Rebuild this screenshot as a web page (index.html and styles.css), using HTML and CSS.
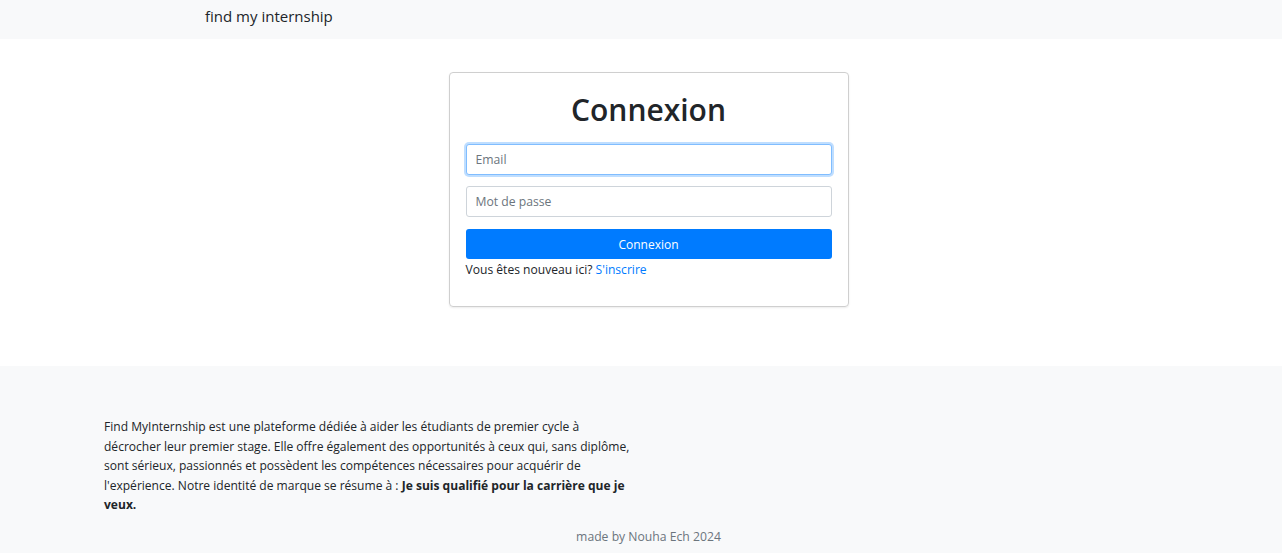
FILE: index.html
```html
<!DOCTYPE html>
<html lang="fr">
<head>
<meta charset="utf-8">
<title>find my internship</title>
<link rel="stylesheet" href="styles.css">
</head>
<body>
<nav class="navbar">
  <a class="brand" href="#">find my internship</a>
</nav>
<main class="main">
  <div class="card">
    <h1 class="title">Connexion</h1>
    <form class="form">
      <input class="field field-focus" type="email" placeholder="Email">
      <input class="field" type="password" placeholder="Mot de passe">
      <button class="btn" type="button">Connexion</button>
    </form>
    <p class="signup">Vous êtes nouveau ici? <a href="#">S'inscrire</a></p>
  </div>
</main>
<footer class="footer">
  <p class="about">Find MyInternship est une plateforme dédiée à aider les étudiants de premier cycle à décrocher leur premier stage. Elle offre également des opportunités à ceux qui, sans diplôme, sont sérieux, passionnés et possèdent les compétences nécessaires pour acquérir de l'expérience. Notre identité de marque se résume à : <strong>Je suis qualifié pour la carrière que je veux.</strong></p>
  <p class="credit">made by Nouha Ech 2024</p>
</footer>
</body>
</html>
```

FILE: styles.css
```css
* { box-sizing: border-box; }
html, body { margin: 0; padding: 0; }
body {
  font-family: "Open Sans", "Noto Sans", sans-serif;
  color: #212529;
  background: #fff;
}
.navbar {
  background: #f8f9fa;
  height: 39px;
  display: flex;
  align-items: flex-start;
  padding: 5px 0 0 205px;
}
.brand {
  color: #212529;
  text-decoration: none;
  font-size: 15px;
  line-height: 22px;
}
.main {
  display: flex;
  justify-content: center;
  padding: 33px 0 59px 15px;
}
.card {
  width: 400px;
  border: 1px solid #cfcfcf;
  border-radius: 4px;
  padding: 13px 16px 10px;
  box-shadow: 0 1px 2px rgba(0,0,0,0.08);
}
.title {
  margin: 0 0 10px;
  text-align: center;
  font-size: 30px;
  line-height: 48px;
  font-weight: 600;
  color: #212529;
}
.form {
  display: flex;
  flex-direction: column;
  gap: 11px;
}
.field {
  height: 31px;
  width: 100%;
  border: 1px solid #ced4da;
  border-radius: 3px;
  padding: 0 9px;
  font-family: inherit;
  font-size: 12.2px;
  color: #495057;
  background: #fff;
}
.field::placeholder { color: #6c757d; }
.field-focus {
  border-color: #80bdff;
  box-shadow: 0 0 0 2px rgba(0,123,255,0.25);
  outline: none;
}
.btn {
  margin-top: 1px;
  height: 30px;
  border: none;
  border-radius: 3px;
  background: #007bff;
  color: #fff;
  font-family: inherit;
  font-size: 12px;
}
.signup {
  margin: 1px 0 16px;
  font-size: 12.1px;
  line-height: 20px;
}
.signup a { color: #007bff; text-decoration: none; }
.footer {
  background: #f8f9fa;
  padding: 51px 0 7px 0;
}
.about {
  margin: 0 0 12px 104px;
  width: 535px;
  font-size: 12.05px;
  line-height: 19.5px;
}
.credit {
  margin: 0;
  padding-left: 15px;
  text-align: center;
  color: #6c757d;
  font-size: 12.2px;
  line-height: 20px;
}
```
